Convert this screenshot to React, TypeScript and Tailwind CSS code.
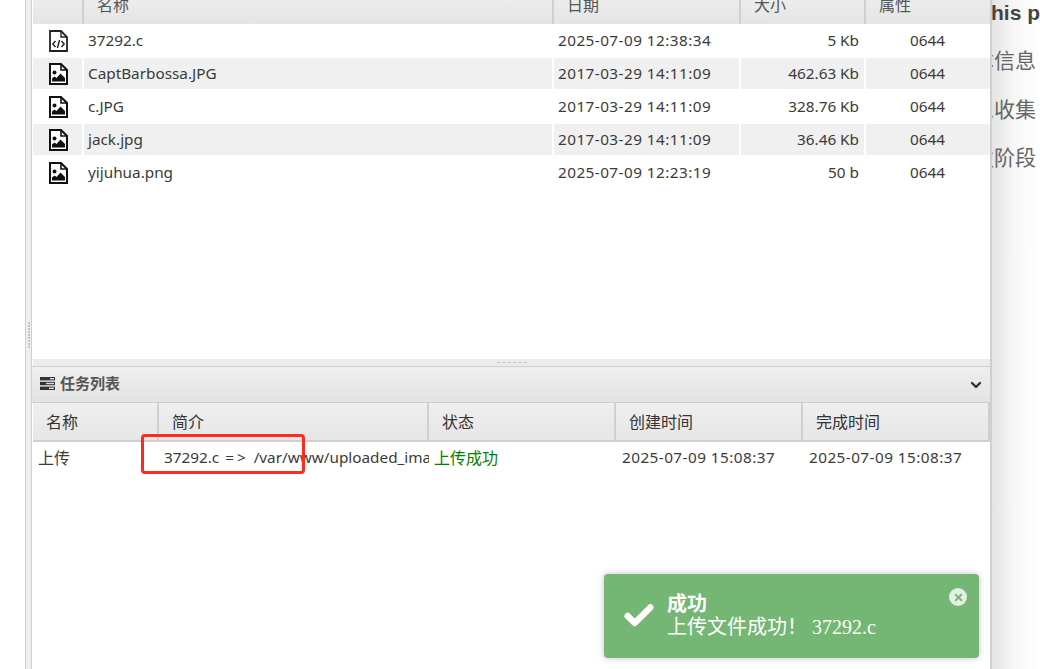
import React from "react";
import { ChevronDown, Check, X } from "lucide-react";

const sans = "font-['Noto_Sans','Noto_Sans_CJK_SC',sans-serif]";

function CodeFile() {
  return (
    <svg width="19" height="22" viewBox="0 0 19 22" fill="none">
      <path d="M1 1H12L18 7V21H1Z" stroke="#222" strokeWidth="1.8" fill="#fff" />
      <path d="M12 1V7H18" stroke="#222" strokeWidth="1.4" />
      <path d="M6.5 11L3.8 14L6.5 17M12.5 11L15.2 14L12.5 17M10.6 10L8.4 18" stroke="#222" strokeWidth="1.4" />
    </svg>
  );
}

function ImageFile() {
  return (
    <svg width="19" height="22" viewBox="0 0 19 22" fill="none">
      <path d="M1 1H12L18 7V21H1Z" stroke="#111" strokeWidth="2" fill="#fff" />
      <path d="M12 1V7H18" stroke="#111" strokeWidth="1.6" />
      <circle cx="5.5" cy="9.5" r="2" fill="#111" />
      <path d="M3 18.5V15.5L5.5 13.5L7.5 15L11.5 10.5L16 15V18.5Z" fill="#111" />
    </svg>
  );
}

const files = [
  { name: "37292.c", date: "2025-07-09 12:38:34", size: "5 Kb", code: true },
  { name: "CaptBarbossa.JPG", date: "2017-03-29 14:11:09", size: "462.63 Kb" },
  { name: "c.JPG", date: "2017-03-29 14:11:09", size: "328.76 Kb" },
  { name: "jack.jpg", date: "2017-03-29 14:11:09", size: "36.46 Kb" },
  { name: "yijuhua.png", date: "2025-07-09 12:23:19", size: "50 b" },
];

const headCell = "flex items-center border-r-2 border-[#d0d0d0]";

export default function App() {
  return (
    <div className={`relative flex h-[669px] w-[1040px] overflow-hidden bg-white text-[15.3px] text-[#3a3a3a] ${sans}`}>
      <div className="w-[25px] shrink-0 bg-white" />

      {/* left splitter */}
      <div className="flex w-[7px] shrink-0 flex-col items-center justify-center border-x border-[#cfcfcf] bg-[#efefef]">
        <div className="flex flex-col gap-[1px]">
          {[0, 1, 2, 3, 4, 5, 6, 7, 8].map((i) => (
            <div key={i} className="h-[2px] w-[2px] bg-[#c4c4c4]" />
          ))}
        </div>
      </div>

      {/* main panel */}
      <div className="flex w-[960px] shrink-0 flex-col overflow-hidden border-r-2 border-[#cfcfcf] pl-[1px]">
        <div className="h-[359px] shrink-0 overflow-hidden">
          <div className="-mt-[14px] flex h-[38px] bg-gradient-to-b from-[#f0f0f0] to-[#e5e5e5] pl-[1px] text-[16px] text-[#555]">
            <div className={`${headCell} w-[50px]`} />
            <div className={`${headCell} w-[470px] pl-[13px]`}>名称</div>
            <div className={`${headCell} w-[187px] pl-[13px]`}>日期</div>
            <div className={`${headCell} w-[125px] pl-[13px]`}>大小</div>
            <div className="flex w-[124px] items-center pl-[13px]">属性</div>
          </div>
          {files.map((f, i) => (
            <div key={f.name} className={`flex h-[33px] pl-[1px] ${i % 2 === 1 ? "bg-[#f0f0f0] border-y border-white" : "bg-white"}`}>
              <div className="flex w-[50px] items-center justify-center border-r-2 border-white">
                {f.code ? <CodeFile /> : <ImageFile />}
              </div>
              <div className="flex w-[470px] items-center border-r-2 border-white pl-1">{f.name}</div>
              <div className="flex w-[187px] items-center border-r-2 border-white pl-1 tracking-[0.45px]">{f.date}</div>
              <div className="flex w-[125px] items-center justify-end border-r-2 border-white pr-[5px]">{f.size}</div>
              <div className="flex w-[124px] items-center pl-[44px]">0644</div>
            </div>
          ))}
        </div>

        {/* horizontal splitter */}
        <div className="flex h-[7px] shrink-0 items-center justify-center bg-[#ececec]">
          <div className="w-[30px] border-t border-dashed border-[#c4c4c4]" />
        </div>

        {/* tasks panel */}
        <div className="-ml-[1px] flex h-[37px] shrink-0 items-center justify-between border-y border-[#cfcfcf] bg-gradient-to-b from-[#efefef] to-[#e3e3e3] pl-2 pr-[6px] text-[15px] font-bold text-[#555]">
          <div className="-mt-[2px] flex items-center gap-[5px]">
            <svg width="15" height="13" viewBox="0 0 15 13" fill="#333">
              <rect x="0" y="0" width="15" height="3.4" />
              <rect x="0" y="4.8" width="15" height="3.4" />
              <rect x="0" y="9.6" width="15" height="3.4" />
              <rect x="10" y="1" width="4" height="1.4" fill="#ddd" />
              <rect x="6" y="5.8" width="8" height="1.4" fill="#ddd" />
              <rect x="9" y="10.6" width="5" height="1.4" fill="#ddd" />
            </svg>
            <span>任务列表</span>
          </div>
          <ChevronDown size={16} strokeWidth={3.5} className="text-[#333]" />
        </div>
        <div className="flex h-[39px] shrink-0 border-b-2 border-[#cfcfcf] bg-gradient-to-b from-[#efefef] to-[#e6e6e6] pl-[1px] text-[16px] text-[#333]">
          <div className={`${headCell} w-[125px] pl-[12px]`}>名称</div>
          <div className={`${headCell} w-[270px] pl-[13px]`}>简介</div>
          <div className={`${headCell} w-[187px] pl-[13px]`}>状态</div>
          <div className={`${headCell} w-[187px] pl-[13px]`}>创建时间</div>
          <div className={`${headCell} w-[187px] pl-[13px]`}>完成时间</div>
        </div>
        <div className="flex h-[31px] shrink-0 items-center pl-[1px]">
          <div className="w-[125px] pl-1 text-[16px]">上传</div>
          <div className="w-[270px] overflow-hidden whitespace-nowrap pl-[5px] pr-[1px]">
            37292.c <span className="ml-[2px] mr-[1px] tracking-[3px]">=&gt;</span> /var/www/uploaded_images/37292.c
          </div>
          <div className="w-[187px] pl-[5px] text-[16px] text-[#008000]">上传成功</div>
          <div className="w-[187px] pl-[6px] tracking-[0.45px]">2025-07-09 15:08:37</div>
          <div className="w-[187px] pl-[6px] tracking-[0.45px]">2025-07-09 15:08:37</div>
        </div>
      </div>

      {/* right page behind */}
      <div className="flex flex-1 flex-col overflow-hidden whitespace-nowrap bg-gradient-to-r from-[#e4e4e4] via-[#f8f8f8] to-white text-[21px] text-[#666]">
        <div className="-ml-[8px] mt-[-1px] h-[28px] font-['Liberation_Sans',sans-serif] font-bold leading-[28px] text-[#444]">this page</div>
        <div className="-ml-[40px] mt-[19px] leading-[28px]">基本信息</div>
        <div className="-ml-[40px] mt-[21px] leading-[28px]">信息收集</div>
        <div className="-ml-[40px] mt-[20px] leading-[28px]">开发阶段</div>
      </div>

      {/* highlight box over the task row */}
      <div className="absolute left-[141px] top-[434px] h-[40px] w-[164px] rounded-[4px] border-[3px] border-[#ff2a1f]" />

      {/* toast */}
      <div className="absolute left-[604px] top-[574px] flex h-[84px] w-[375px] items-center rounded-[4px] bg-[#74b674] pl-[18px] font-['Liberation_Serif','Noto_Sans_CJK_SC',serif] text-white shadow-[0_0_6px_rgba(0,0,0,0.25)]">
        <Check size={34} strokeWidth={4.5} strokeLinecap="round" strokeLinejoin="round" className="shrink-0" />
        <div className="ml-[11px] flex flex-col text-[20px] leading-[23px]">
          <span className="font-bold">成功</span>
          <span>上传文件成功！ 37292.c</span>
        </div>
        <div className="absolute right-[12px] top-[14px] flex h-[18px] w-[18px] items-center justify-center rounded-full bg-[#e3f0e3]">
          <X size={11} strokeWidth={4} className="text-[#74b674]" />
        </div>
      </div>
    </div>
  );
}
